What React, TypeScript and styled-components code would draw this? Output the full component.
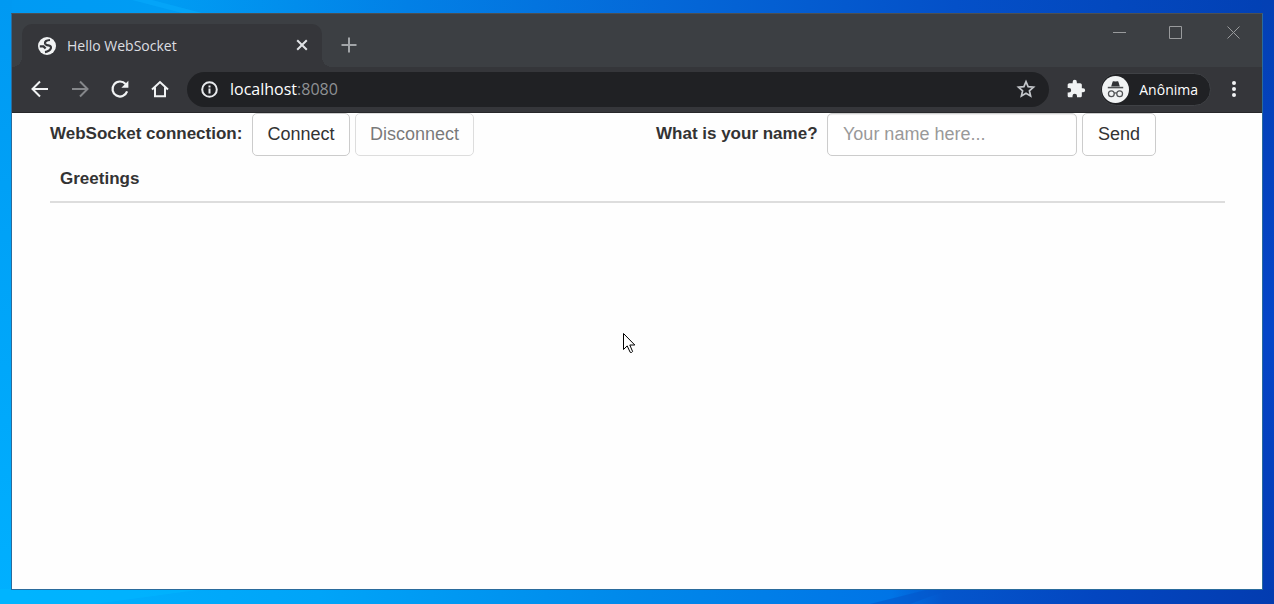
import React from 'react';
import styled, { createGlobalStyle, css } from 'styled-components';

const uiFont = '"Open Sans", "Noto Sans", sans-serif';

const GlobalStyle = createGlobalStyle`
  *, *::before, *::after { box-sizing: border-box; }
  body { margin: 0; font-family: "Liberation Sans", Arial, sans-serif; }
  button { font: inherit; cursor: default; }
`;

const Desktop = styled.div`
  position: relative;
  display: flex;
  min-height: 100vh;
  padding: 13px 11px 14px 11px;
  background:
    linear-gradient(90deg, #00b2ff 0%, #00a4f8 25%, #0088ea 50%, #0074e6 70%, #0456cc 74%, #0346c0 86%, #033cb0 100%) bottom / 100% 15px no-repeat,
    linear-gradient(180deg, #0099f2 0%, #00b0ff 100%) left / 12px 100% no-repeat,
    linear-gradient(180deg, #0340b4 0%, #0546c8 55%, #033cb2 100%) right / 12px 100% no-repeat,
    linear-gradient(90deg, #009af3 0%, #009cf3 13%, #0280e6 32%, #0468d8 52%, #0450c8 75%, #0240b4 100%);
`;

const Rays = styled.svg`
  position: absolute;
  inset: 0;
  width: 100%;
  height: 100%;
`;

const Window = styled.div`
  position: relative;
  display: flex;
  flex-direction: column;
  flex: 1;
  min-width: 0;
  border: 1px solid #2a6b9c;
  border-top-color: #4c5054;
  background: #fefefe;
`;

const TabStrip = styled.div`
  display: flex;
  align-items: flex-end;
  height: 53px;
  padding-left: 10px;
  background: #3c3f43;
`;

const Tab = styled.div`
  position: relative;
  display: flex;
  align-items: center;
  width: 300px;
  height: 43px;
  padding: 0 12px 0 15px;
  border-radius: 10px 10px 0 0;
  background: #35363a;
  color: #dcdee1;
  font: 14px/20px ${uiFont};

  &::before, &::after {
    content: "";
    position: absolute;
    bottom: 0;
    width: 10px;
    height: 10px;
  }
  &::before {
    right: 100%;
    background: radial-gradient(circle at 0 0, transparent 10px, #35363a 10px);
  }
  &::after {
    left: 100%;
    background: radial-gradient(circle at 100% 0, transparent 10px, #35363a 10px);
  }
`;

const TabTitle = styled.span`
  flex: 1;
  margin-left: 10px;
  white-space: nowrap;
`;

const IconButton = styled.button<{ $w?: number; $h?: number }>`
  display: flex;
  flex: none;
  align-items: center;
  justify-content: center;
  width: ${p => p.$w ?? 40}px;
  height: ${p => p.$h ?? 41}px;
  padding: 0 0 1px;
  border: 0;
  background: none;
  color: #f1f3f4;
  svg { display: block; }
`;

const WindowControls = styled.div`
  display: flex;
  align-self: flex-start;
  margin-left: auto;
`;

const Toolbar = styled.div`
  display: flex;
  align-items: center;
  height: 46px;
  padding: 0 8px;
  border-bottom: 1px solid #27282b;
  background: #35363a;
`;

const AddressBar = styled.div`
  display: flex;
  flex: 1;
  align-items: center;
  min-width: 0;
  height: 35px;
  margin: 0 7px;
  padding: 0 3px 0 14px;
  border-radius: 18px;
  background: #202124;
  color: #8f9194;
  font: 16px/23px ${uiFont};
`;

const Url = styled.div`
  flex: 1;
  margin-left: 12px;
  b { color: #fff; font-weight: 400; }
`;

const Profile = styled.button`
  display: flex;
  align-items: center;
  gap: 10px;
  height: 33px;
  margin-left: 4px;
  margin-right: 3px;
  padding: 0 12px 0 1px;
  border: 1px solid #3f4145;
  border-radius: 17px;
  background: #202124;
  color: #fff;
  font: 14px/19px ${uiFont};
`;

const Page = styled.main`
  flex: 1;
  padding: 0 37px 0 38px;
  color: #333;
  font-size: 17px;
  line-height: 25px;
`;

const Columns = styled.div`
  display: grid;
  grid-template-columns: 1fr 1fr;
  gap: 37px;
`;

const InlineForm = styled.form`
  display: flex;
  gap: 5px;
  white-space: nowrap;
`;

const Label = styled.label<{ $w: number }>`
  width: ${p => p.$w}px;
  margin-top: 8px;
  font-weight: 700;
`;

const field = css`
  height: 43px;
  border: 1px solid #ccc;
  border-radius: 5px;
  background: #fff;
  font: inherit;
  font-size: 18px;
`;

const Button = styled.button<{ $w: number }>`
  ${field}
  width: ${p => p.$w}px;
  padding: 0;
  color: #333;
  &:disabled { opacity: 0.65; }
`;

const NameInput = styled.input`
  ${field}
  width: 250px;
  padding: 0 15px;
  color: #555;
  box-shadow: inset 0 1px 1px rgba(0, 0, 0, 0.075);
  &::placeholder { color: #999; opacity: 1; }
`;

const Table = styled.table`
  width: 100%;
  border-collapse: collapse;
  th {
    padding: 10px;
    border-bottom: 2px solid #ddd;
    text-align: left;
  }
`;

const Cursor = styled.svg`
  position: absolute;
  left: 622px;
  top: 332px;
`;

const Globe = () => (
  <svg width="20" height="20" viewBox="0 0 20 20" aria-hidden="true">
    <circle cx="10" cy="10" r="9" fill="#f1f3f4" />
    <g fill="none" stroke="#35363a" strokeWidth="2.2">
      <path d="M13 4Q7.6 4.400 8 7.200Q8.600 9.200 11.400 9.400Q14.400 9.800 13.900 12.200Q12.800 15.400 8 16.200" />
      <path d="M2.800 10.400H6.500L8.600 12.600" />
    </g>
  </svg>
);

const Back = () => (
  <svg width="20" height="20" viewBox="0 0 20 20" fill="none" stroke="currentColor" strokeWidth="2">
    <path d="M18 10H3M10 2.5L2.5 10l7.5 7.5" />
  </svg>
);

const Forward = () => (
  <svg width="20" height="20" viewBox="0 0 20 20" fill="none" stroke="#85878a" strokeWidth="2">
    <path d="M2 10h15M10 2.5l7.5 7.5-7.5 7.5" />
  </svg>
);

const Reload = () => (
  <svg width="20" height="20" viewBox="0 0 20 20">
    <path d="M15.6 5A7.5 7.5 0 1 0 17.1 12.4" fill="none" stroke="currentColor" strokeWidth="2.2" />
    <path d="M18.4 1.8v7h-7z" fill="currentColor" />
  </svg>
);

const Home = () => (
  <svg width="20" height="20" viewBox="0 0 20 20" fill="none" stroke="currentColor" strokeWidth="2">
    <path d="M2 10.5L10 3l8 7.5M5 8.5V17.2h10V8.5" />
  </svg>
);

const Info = () => (
  <svg width="17" height="17" viewBox="0 0 17 17" fill="none" stroke="#e8eaed" strokeWidth="2">
    <circle cx="8.5" cy="8.5" r="7.3" />
    <path d="M8.5 7.5v5M8.5 4.5v2" />
  </svg>
);

const Star = () => (
  <svg width="20" height="20" viewBox="0 0 20 20" fill="none" stroke="#c3c6ca" strokeWidth="1.7">
    <path d="M10 2.7l2.1 5 5.4.5-4.1 3.6 1.2 5.3-4.6-2.8-4.6 2.8 1.2-5.3-4.1-3.6 5.4-.5z" />
  </svg>
);

const Puzzle = () => (
  <svg width="20" height="20" viewBox="0 0 24 24" fill="currentColor">
    <path d="M20.5 11H19V7c0-1.1-.9-2-2-2h-4V3.5a2.5 2.5 0 0 0-5 0V5H4c-1.1 0-2 .9-2 2v3.8h1.5a2.7 2.7 0 0 1 0 5.4H2V20c0 1.1.9 2 2 2h3.8v-1.5a2.7 2.7 0 0 1 5.4 0V22H17c1.1 0 2-.9 2-2v-4h1.5a2.5 2.5 0 0 0 0-5z" />
  </svg>
);

const Incognito = () => (
  <svg width="27" height="27" viewBox="0 0 28 28" aria-hidden="true">
    <circle cx="14" cy="14" r="14" fill="#f1f3f4" />
    <path d="M9.5 11l1.6-5.2q.2-.6.9-.4l2 .4 2-.4q.7-.2.9.4L18.500 11z" fill="#303236" />
    <path d="M6 11.2h16v1.6H6z" fill="#505255" />
    <g fill="none" stroke="#505255" strokeWidth="1.3">
      <circle cx="9.7" cy="18.3" r="3" />
      <circle cx="18.3" cy="18.3" r="3" />
      <path d="M12.7 18q1.3-1 2.6 0" />
    </g>
  </svg>
);

export default function App() {
  return (
    <>
      <GlobalStyle />
      <Desktop>
        <Rays viewBox="0 0 1274 604" preserveAspectRatio="none" aria-hidden="true">
          <path d="M132 0h20l50 13h-20z" fill="#06a8fa" opacity=".7" />
          <path d="M205 589L95 604H0v-15z" fill="#00b6ff" opacity=".6" />
          <path d="M870 604l60-15h20l-40 15z" fill="#0456cc" opacity=".6" />
        </Rays>
        <Window>
          <TabStrip>
            <Tab>
              <Globe />
              <TabTitle>Hello WebSocket</TabTitle>
              <IconButton $w={16} $h={21} aria-label="Close tab">
                <svg width="12" height="12" viewBox="0 0 12 12" stroke="#e0e2e5" strokeWidth="2"><path d="M1.2 1.2l9.6 9.6M10.8 1.2l-9.6 9.6" /></svg>
              </IconButton>
            </Tab>
            <IconButton $w={54} $h={43} aria-label="New tab">
              <svg width="16" height="16" viewBox="0 0 16 16" stroke="#a2a5a8" strokeWidth="2"><path d="M8 .5v15M.5 8h15" /></svg>
            </IconButton>
            <WindowControls>
              <IconButton $w={56} $h={38} aria-label="Minimize">
                <svg width="13" height="13" viewBox="0 0 13 13" stroke="#999b9d"><path d="M0 6.5h13" /></svg>
              </IconButton>
              <IconButton $w={57} $h={38} aria-label="Maximize">
                <svg width="13" height="13" viewBox="0 0 13 13" fill="none" stroke="#999b9d"><path d="M.5.5h12v12H.5z" /></svg>
              </IconButton>
              <IconButton $w={58} $h={38} aria-label="Close window">
                <svg width="13" height="13" viewBox="0 0 13 13" stroke="#999b9d"><path d="M.5.5l12 12M12.5.5l-12 12" /></svg>
              </IconButton>
            </WindowControls>
          </TabStrip>
          <Toolbar>
            <IconButton aria-label="Back"><Back /></IconButton>
            <IconButton aria-label="Forward"><Forward /></IconButton>
            <IconButton aria-label="Reload"><Reload /></IconButton>
            <IconButton aria-label="Home"><Home /></IconButton>
            <AddressBar>
              <Info />
              <Url><b>localhost</b>:8080</Url>
              <IconButton $h={35} aria-label="Bookmark this page"><Star /></IconButton>
            </AddressBar>
            <IconButton aria-label="Extensions"><Puzzle /></IconButton>
            <Profile><Incognito />Anônima</Profile>
            <IconButton aria-label="Menu">
              <svg width="6" height="18" viewBox="0 0 6 18" fill="currentColor"><circle cx="3" cy="3" r="2" /><circle cx="3" cy="9" r="2" /><circle cx="3" cy="15" r="2" /></svg>
            </IconButton>
          </Toolbar>
          <Page>
            <Columns>
              <InlineForm onSubmit={e => e.preventDefault()}>
                <Label $w={197} htmlFor="connect">WebSocket connection:</Label>
                <Button $w={98} id="connect" type="submit">Connect</Button>
                <Button $w={119} type="button" disabled>Disconnect</Button>
              </InlineForm>
              <InlineForm onSubmit={e => e.preventDefault()}>
                <Label $w={166} htmlFor="name">What is your name?</Label>
                <NameInput id="name" type="text" placeholder="Your name here..." />
                <Button $w={74} type="submit">Send</Button>
              </InlineForm>
            </Columns>
            <Table>
              <thead>
                <tr><th scope="col">Greetings</th></tr>
              </thead>
            </Table>
          </Page>
        </Window>
        <Cursor width="14" height="22" viewBox="0 0 14 22" aria-hidden="true">
          <path d="M1.5 1.5v16l3.7-3.6 3 6.4q1.3.8 2.4-.8L7.8 13h5z" fill="#fff" stroke="#000" />
        </Cursor>
      </Desktop>
    </>
  );
}
